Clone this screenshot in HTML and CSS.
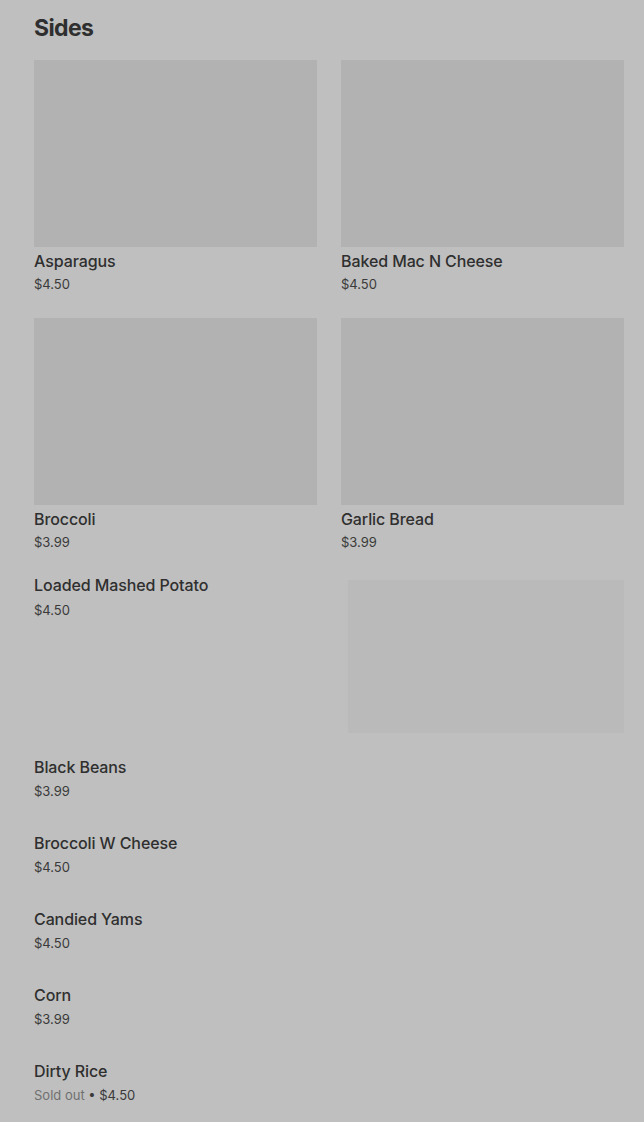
FILE: index.html
```html
<!DOCTYPE html>
<html lang="en">
<head>
    <meta charset="UTF-8">
    <meta name="viewport" content="width=device-width, initial-scale=1.0">
    <title>Sides</title>
    <link rel="stylesheet" href="styles.css">
</head>
<body>

    <section class="menu-section">
        <h2 class="section-title">Sides</h2>

        <div class="card-grid">
            <div class="card">
                <div class="card-image"></div>
                <div class="item-name">Asparagus</div>
                <div class="item-price">$4.50</div>
            </div>
            <div class="card">
                <div class="card-image"></div>
                <div class="item-name">Baked Mac N Cheese</div>
                <div class="item-price">$4.50</div>
            </div>
            <div class="card">
                <div class="card-image"></div>
                <div class="item-name">Broccoli</div>
                <div class="item-price">$3.99</div>
            </div>
            <div class="card">
                <div class="card-image"></div>
                <div class="item-name">Garlic Bread</div>
                <div class="item-price">$3.99</div>
            </div>
        </div>

        <div class="item-list">
            <div class="list-item with-image">
                <div class="item-text">
                    <div class="item-name">Loaded Mashed Potato</div>
                    <div class="item-price">$4.50</div>
                </div>
                <div class="row-image"></div>
            </div>
            <div class="list-item">
                <div class="item-name">Black Beans</div>
                <div class="item-price">$3.99</div>
            </div>
            <div class="list-item">
                <div class="item-name">Broccoli W Cheese</div>
                <div class="item-price">$4.50</div>
            </div>
            <div class="list-item">
                <div class="item-name">Candied Yams</div>
                <div class="item-price">$4.50</div>
            </div>
            <div class="list-item">
                <div class="item-name">Corn</div>
                <div class="item-price">$3.99</div>
            </div>
            <div class="list-item">
                <div class="item-name">Dirty Rice</div>
                <div class="item-price"><span class="sold-out">Sold out</span> &bull; $4.50</div>
            </div>
        </div>
    </section>

</body>
</html>
```

FILE: styles.css
```css
body {
    margin: 0;
    font-family: Inter, "Noto Sans", sans-serif;
    background-color: #bfbfbf;
    color: #2f2f2f;
}

.menu-section {
    padding: 12px 20px 40px 34px;
}

.section-title {
    margin: 0 0 16px 0;
    font-size: 23px;
    line-height: 32px;
    font-weight: 700;
    letter-spacing: -0.6px;
}

.card-grid {
    display: grid;
    grid-template-columns: 1fr 1fr;
    column-gap: 24px;
    row-gap: 24px;
}

.card-image {
    height: 187px;
    background-color: #b2b2b2;
    margin-bottom: 4px;
}

.item-name {
    font-size: 16px;
    line-height: 20px;
    font-weight: 500;
    letter-spacing: -0.1px;
}

.item-price {
    margin-top: 4px;
    font-size: 13px;
    line-height: 20px;
    color: #3a3a3a;
}

.card .item-price {
    margin-top: 3px;
}

.item-list {
    margin-top: 23px;
    display: flex;
    flex-direction: column;
}

.list-item {
    margin-bottom: 32px;
}

.list-item.with-image {
    display: flex;
    gap: 24px;
    margin-bottom: 24px;
}

.list-item.with-image .item-price {
    margin-top: 5px;
}

.item-text {
    flex: 1;
}

.row-image {
    width: 276px;
    height: 153px;
    margin-top: 5px;
    background-color: #bababa;
}

.sold-out {
    color: #707070;
}
```
